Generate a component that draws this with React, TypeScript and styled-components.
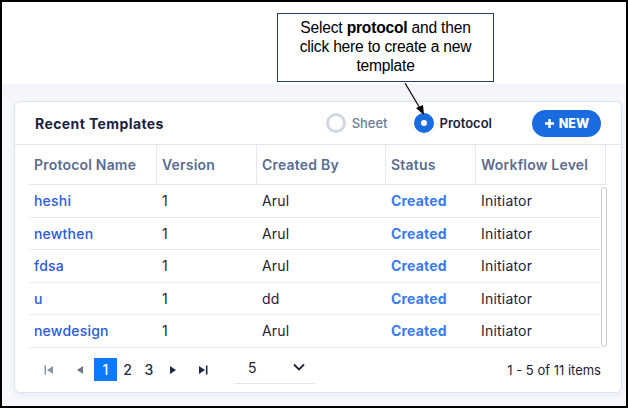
import React from "react";
import styled, { createGlobalStyle } from "styled-components";

const GlobalStyle = createGlobalStyle`
  html, body { margin: 0; padding: 0; background: #fff; }
  * { box-sizing: border-box; }
`;

const Frame = styled.div`
  position: relative;
  width: 628px;
  height: 408px;
  border: 2px solid #000;
  display: flex;
  flex-direction: column;
  font-family: Inter, "Open Sans", sans-serif;
  overflow: hidden;
`;

const TopArea = styled.div`
  height: 82px;
  background: #fff;
  padding: 11px 0 0 275px;
`;

const Callout = styled.div`
  width: 217px;
  height: 69px;
  border: 1px solid #2b3f63;
  padding-top: 4px;
  text-align: center;
  font-family: "Liberation Sans", Arial, sans-serif;
  font-size: 15.6px;
  line-height: 19px;
  color: #000;
  letter-spacing: -0.2px;
  b { font-weight: 700; }
`;

const Arrow = styled.svg`
  position: absolute;
  left: 0;
  top: 0;
  pointer-events: none;
`;

const BottomArea = styled.div`
  flex: 1;
  background: linear-gradient(#f3f5fa, #f7f8fc 20px, #f7f8fc);
  padding: 17px 0 0 12px;
`;

const Card = styled.div`
  width: 608px;
  height: 292px;
  background: #fff;
  border: 1px solid #dbe3f2;
  border-radius: 6px;
  box-shadow: 0 2px 6px rgba(40, 70, 130, 0.07);
  display: flex;
  flex-direction: column;
`;

const CardHeader = styled.div`
  height: 43px;
  border-bottom: 1px solid #dfe6f2;
  display: flex;
  align-items: center;
  padding: 0 20px 0 20px;
`;

const Title = styled.div`
  font-size: 14px;
  font-weight: 700;
  color: #1b2240;
  flex: 1;
  padding-top: 1px;
  letter-spacing: 0.4px;
`;

const RadioGroup = styled.div`
  display: flex;
  align-items: center;
  gap: 26px;
  margin-right: 40px;
`;

const RadioItem = styled.label<{ checked?: boolean }>`
  display: flex;
  align-items: center;
  gap: 6px;
  font-size: 13px;
  font-weight: ${(p) => (p.checked ? 600 : 500)};
  color: ${(p) => (p.checked ? "#1e2235" : "#6f7d96")};
`;

const RadioCircle = styled.span<{ checked?: boolean }>`
  width: 20px;
  height: 20px;
  border-radius: 50%;
  border: ${(p) => (p.checked ? "7px solid #1a6be0" : "3px solid #d4d8e0")};
  background: #fff;
`;

const NewButton = styled.button`
  width: 69px;
  height: 27px;
  border: none;
  border-radius: 14px;
  background: #1a6be0;
  color: #fff;
  font-family: Inter, sans-serif;
  font-size: 12.5px;
  font-weight: 800;
  display: flex;
  align-items: center;
  justify-content: center;
  gap: 4px;
  padding: 0;
`;

const TableWrap = styled.div`
  margin: 0 15px 0 14px;
  display: flex;
  flex-direction: column;
`;

const cols = "128px 100px 129px 90px 1fr";

const HeadRow = styled.div`
  display: grid;
  grid-template-columns: ${cols};
  height: 40px;
  border-bottom: 1px solid #e4e9f1;
`;

const HeadCell = styled.div`
  display: flex;
  align-items: center;
  padding-left: 5px;
  border-right: 1px solid #e4e9f1;
  font-size: 14px;
  font-weight: 600;
  letter-spacing: 0.2px;
  color: #5b6d90;
`;

const BodyWrap = styled.div`
  position: relative;
  padding-right: 4px;
`;

const Row = styled.div`
  display: grid;
  grid-template-columns: ${cols};
  height: 32.5px;
  border-bottom: 1px solid #e8ecf2;
`;

const Cell = styled.div<{ kind?: "name" | "status" | "plain" }>`
  display: flex;
  align-items: center;
  padding-left: 5px;
  font-size: 14px;
  letter-spacing: 0.2px;
  font-weight: ${(p) => (p.kind === "status" ? 700 : p.kind === "name" ? 500 : 400)};
  color: ${(p) =>
    p.kind === "status" ? "#3b7bf0" : p.kind === "name" ? "#2a5bd7" : "#1f2233"};
`;

const ScrollThumb = styled.div`
  position: absolute;
  right: -1px;
  top: 2px;
  bottom: 1px;
  width: 6px;
  border: 1px solid #c9cdd3;
  border-radius: 3px;
  background: #fff;
`;

const Pager = styled.div`
  flex: 1;
  display: flex;
  align-items: center;
  padding: 0 20px 0 19px;
`;

const PagerBtn = styled.div<{ w: number; active?: boolean; dim?: boolean }>`
  width: ${(p) => p.w}px;
  height: 23px;
  display: flex;
  align-items: center;
  justify-content: center;
  font-size: 14px;
  font-weight: 500;
  background: ${(p) => (p.active ? "#0a7bff" : "transparent")};
  color: ${(p) => (p.active ? "#fff" : p.dim ? "#8a93a4" : "#1f2a44")};
`;

const SizeSelect = styled.div`
  margin-left: 17px;
  width: 80px;
  height: 28px;
  border-bottom: 1px solid #dfe3ea;
  display: flex;
  align-items: center;
  justify-content: space-between;
  padding: 0 10px 4px 13px;
  font-size: 14px;
  color: #1f2233;
`;

const Items = styled.div`
  margin-left: auto;
  font-size: 13px;
  color: #1f2233;
`;

const Tri = ({ dir, bar, color }: { dir: "l" | "r"; bar?: boolean; color: string }) => (
  <svg width="10" height="10" viewBox="0 0 10 10">
    {dir === "l" ? (
      <>
        {bar && <rect x="0.5" y="0.5" width="1.6" height="9" fill={color} />}
        <polygon points="9,1 3,5 9,9" fill={color} />
      </>
    ) : (
      <>
        <polygon points="1,1 7,5 1,9" fill={color} />
        {bar && <rect x="7.9" y="0.5" width="1.6" height="9" fill={color} />}
      </>
    )}
  </svg>
);

const rows = [
  { name: "heshi", by: "Arul" },
  { name: "newthen", by: "Arul" },
  { name: "fdsa", by: "Arul" },
  { name: "u", by: "dd" },
  { name: "newdesign", by: "Arul" },
];

export default function App() {
  return (
    <>
      <GlobalStyle />
      <Frame>
        <TopArea>
          <Callout>
            Select <b>protocol</b> and then
            <br />
            click here to create a new
            <br />
            template
          </Callout>
        </TopArea>
        <BottomArea>
          <Card>
            <CardHeader>
              <Title>Recent Templates</Title>
              <RadioGroup>
                <RadioItem>
                  <RadioCircle />
                  Sheet
                </RadioItem>
                <RadioItem checked>
                  <RadioCircle checked />
                  Protocol
                </RadioItem>
              </RadioGroup>
              <NewButton>
                <svg width="11" height="11" viewBox="0 0 11 11">
                  <path d="M5.5 1v9M1 5.5h9" stroke="#fff" strokeWidth="2.4" />
                </svg>
                NEW
              </NewButton>
            </CardHeader>
            <TableWrap>
              <HeadRow>
                <HeadCell>Protocol Name</HeadCell>
                <HeadCell>Version</HeadCell>
                <HeadCell>Created By</HeadCell>
                <HeadCell>Status</HeadCell>
                <HeadCell>Workflow Level</HeadCell>
              </HeadRow>
              <BodyWrap>
                {rows.map((r) => (
                  <Row key={r.name}>
                    <Cell kind="name">{r.name}</Cell>
                    <Cell>1</Cell>
                    <Cell>{r.by}</Cell>
                    <Cell kind="status">Created</Cell>
                    <Cell>Initiator</Cell>
                  </Row>
                ))}
                <ScrollThumb />
              </BodyWrap>
            </TableWrap>
            <Pager>
              <PagerBtn w={30} dim>
                <Tri dir="l" bar color="#8a93a4" />
              </PagerBtn>
              <PagerBtn w={30} dim>
                <Tri dir="l" color="#6f7888" />
              </PagerBtn>
              <PagerBtn w={23} active>
                1
              </PagerBtn>
              <PagerBtn w={21}>2</PagerBtn>
              <PagerBtn w={22}>3</PagerBtn>
              <PagerBtn w={28}>
                <Tri dir="r" color="#1f2a44" />
              </PagerBtn>
              <PagerBtn w={30}>
                <Tri dir="r" bar color="#1f2a44" />
              </PagerBtn>
              <SizeSelect>
                5
                <svg width="12" height="8" viewBox="0 0 12 8">
                  <path d="M1 1.5l5 5 5-5" fill="none" stroke="#1f2233" strokeWidth="1.8" />
                </svg>
              </SizeSelect>
              <Items>1 - 5 of 11 items</Items>
            </Pager>
          </Card>
        </BottomArea>
        <Arrow width="628" height="408">
          <line x1="403" y1="81" x2="419" y2="108" stroke="#000" strokeWidth="1.2" />
          <polygon points="422,113 414,106 421,103" fill="#000" />
        </Arrow>
      </Frame>
    </>
  );
}
